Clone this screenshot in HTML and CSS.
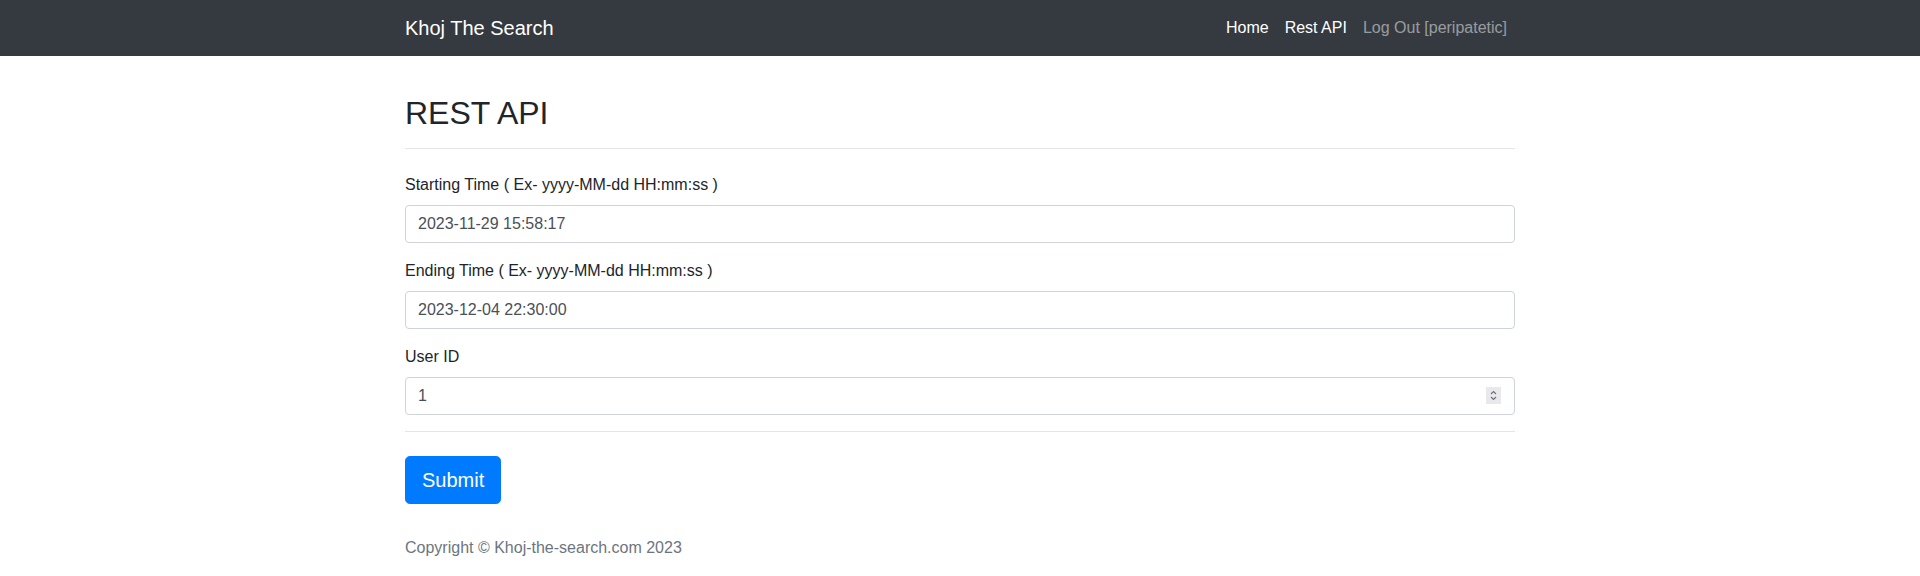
FILE: index.html
```html
<!DOCTYPE html>
<html lang="en">
<head>
<meta charset="utf-8">
<title>Khoj The Search - REST API</title>
<link rel="stylesheet" href="styles.css">
</head>
<body>
<nav class="navbar">
  <div class="navbar-inner">
    <a class="brand" href="#">Khoj The Search</a>
    <ul class="nav">
      <li><a class="nav-link active" href="#">Home</a></li>
      <li><a class="nav-link active" href="#">Rest API</a></li>
      <li><a class="nav-link" href="#">Log Out [peripatetic]</a></li>
    </ul>
  </div>
</nav>
<main class="container">
  <h2 class="title">REST API</h2>
  <hr class="rule">
  <form class="form">
    <div class="form-group">
      <label class="label" for="start">Starting Time ( Ex- yyyy-MM-dd HH:mm:ss )</label>
      <input class="input" id="start" type="text" value="2023-11-29 15:58:17">
    </div>
    <div class="form-group">
      <label class="label" for="end">Ending Time ( Ex- yyyy-MM-dd HH:mm:ss )</label>
      <input class="input" id="end" type="text" value="2023-12-04 22:30:00">
    </div>
    <div class="form-group">
      <label class="label" for="uid">User ID</label>
      <div class="input-wrap">
        <input class="input" id="uid" type="text" value="1">
        <span class="spinner" aria-hidden="true">
          <svg width="15" height="17" viewBox="0 0 15 17">
            <rect x="0" y="0" width="15" height="17" fill="#e9e9ed"/>
            <path d="M5 7 L7.5 4.5 L10 7" fill="none" stroke="#6f6f78" stroke-width="1.2"/>
            <path d="M5 10 L7.5 12.5 L10 10" fill="none" stroke="#6f6f78" stroke-width="1.2"/>
          </svg>
        </span>
      </div>
    </div>
    <hr class="rule">
    <button class="btn" type="button">Submit</button>
  </form>
  <footer class="footer">Copyright © Khoj-the-search.com 2023</footer>
</main>
</body>
</html>
```

FILE: styles.css
```css
* { box-sizing: border-box; }
html, body { margin: 0; padding: 0; }
body {
  font-family: "Liberation Sans", Arial, sans-serif;
  font-size: 16px;
  line-height: 1.5;
  color: #212529;
  background: #fff;
}
.navbar {
  background: #343a40;
  padding: 8px 16px;
}
.navbar-inner {
  width: 1140px;
  margin: 0 auto;
  padding: 0 15px;
  display: flex;
  align-items: center;
  justify-content: space-between;
}
.brand {
  font-size: 20px;
  line-height: 30px;
  padding: 5px 0;
  color: #fff;
  text-decoration: none;
}
.nav {
  list-style: none;
  margin: 0;
  padding: 0;
  display: flex;
}
.nav-link {
  display: block;
  padding: 8px 8px;
  color: rgba(255,255,255,.5);
  text-decoration: none;
}
.nav-link.active { color: #fff; }
.container {
  width: 1140px;
  margin: 0 auto;
  padding: 38px 15px 0;
}
.title {
  font-size: 32px;
  font-weight: 500;
  line-height: 1.2;
  margin: 0 0 8px;
}
.rule {
  margin: 16px 0 24px;
  border: 0;
  border-top: 1px solid rgba(0,0,0,.1);
}
.form-group { margin-bottom: 16px; }
.label {
  display: inline-block;
  margin-bottom: 8px;
}
.input {
  display: block;
  width: 100%;
  height: 38px;
  padding: 6px 12px;
  font-family: inherit;
  font-size: 16px;
  line-height: 1.5;
  color: #495057;
  background: #fff;
  border: 1px solid #ced4da;
  border-radius: 4px;
}
.input-wrap { position: relative; }
.spinner {
  position: absolute;
  right: 14px;
  top: 10px;
  width: 15px;
  height: 17px;
  display: block;
}
.spinner svg { display: block; }
.btn {
  display: inline-block;
  font-family: inherit;
  font-size: 20px;
  line-height: 1.5;
  padding: 8px 16px;
  color: #fff;
  background: #007bff;
  border: 1px solid #007bff;
  border-radius: 4.8px;
  vertical-align: top;
}
.footer {
  margin-top: 32px;
  color: #6c757d;
}
```
